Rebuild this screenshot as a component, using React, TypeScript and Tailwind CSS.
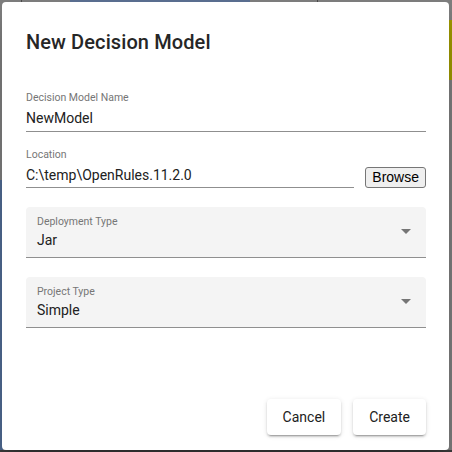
import React from "react";

const font = { fontFamily: "Roboto, 'Noto Sans', sans-serif" };

type TextFieldProps = {
    label: string;
    value: string;
};

const TextField = ({ label, value }: TextFieldProps) => (
    <div className="flex flex-col">
        <span className="h-4 text-[10.5px] leading-4 text-[#767676]">{label}</span>
        <div className="h-[26px] border-b border-[#8f8f8f] text-[14px] leading-[25px] text-[#212121]">
            {value}
        </div>
    </div>
);

const SelectField = ({ label, value }: TextFieldProps) => (
    <div className="relative h-[51px] rounded-t-[4px] border-b border-[#8f8f8f] bg-[#f4f4f4] pl-[11px]">
        <div className="pt-[9px] text-[10.5px] leading-[12px] text-[#767676]">{label}</div>
        <div className="text-[14px] leading-6 text-[#212121]">{value}</div>
        {/* dropdown arrow */}
        <svg className="absolute right-[8px] top-[12px] h-6 w-6" viewBox="0 0 24 24" fill="#757575">
            <path d="M7 10l5 5 5-5z" />
        </svg>
    </div>
);

const Button = ({ children }: { children: React.ReactNode }) => (
    <button className="h-9 rounded-[4px] bg-white px-4 text-[14px] font-normal text-[#212121] shadow-[0_3px_1px_-2px_rgba(0,0,0,0.2),0_2px_2px_0_rgba(0,0,0,0.14),0_1px_5px_0_rgba(0,0,0,0.12)]">
        {children}
    </button>
);

export default function App() {
    return (
        <div className="relative h-[452px] w-[452px] overflow-hidden bg-[#7e7e7e]" style={font}>
            {/* dimmed page behind the dialog */}
            <div className="absolute left-[70px] top-0 h-[3px] w-[180px] bg-[#5b6f92]" />
            <div className="absolute left-[21px] top-0 h-[3px] w-px bg-[#4a4a4a]" />
            <div className="absolute left-[317px] top-0 h-[3px] w-px bg-[#4a4a4a]" />
            <div className="absolute right-0 top-[20px] h-[60px] w-[4px] bg-[#9f9900]" />
            <div className="absolute left-0 top-[180px] h-[272px] w-[3px] bg-[#4f6a92]" />
            <div className="absolute bottom-0 left-0 h-[2px] w-full bg-[#3c3c3c]" />

            {/* Dialog */}
            <div className="relative ml-[2px] mt-[2px] flex h-[448px] w-[447px] flex-col rounded-[4px] bg-white px-6 pt-6 shadow-[0_11px_15px_-7px_rgba(0,0,0,0.2),0_24px_38px_3px_rgba(0,0,0,0.14)]">
                <h2 className="h-8 text-[20px] font-medium leading-8 tracking-[0.1px] text-[#262626]">
                    New Decision Model
                </h2>

                <div className="mt-8 w-[400px]">
                    <TextField label="Decision Model Name" value="NewModel" />
                </div>

                {/* Location row */}
                <div className="mt-[15px] flex w-[400px] flex-col">
                    <span className="h-4 text-[10.5px] leading-4 text-[#767676]">Location</span>
                    <div className="flex items-end justify-between">
                        <div className="h-[25px] w-[328px] border-b border-[#8f8f8f] text-[14px] leading-6 text-[#212121]">
                            C:\temp\OpenRules.11.2.0
                        </div>
                        <button
                            className="h-[21px] rounded-[3px] border border-[#767676] bg-[#efefef] px-[6px] text-[14px] leading-[17px] text-black"
                            style={{ fontFamily: "'Liberation Sans', Arial, sans-serif" }}
                        >
                            Browse
                        </button>
                    </div>
                </div>

                <div className="mt-[19px] w-[400px]">
                    <SelectField label="Deployment Type" value="Jar" />
                </div>

                <div className="mt-[19px] w-[400px]">
                    <SelectField label="Project Type" value="Simple" />
                </div>

                <div className="mt-[71px] flex w-[400px] justify-end gap-3">
                    <Button>Cancel</Button>
                    <Button>Create</Button>
                </div>
            </div>
        </div>
    );
}
